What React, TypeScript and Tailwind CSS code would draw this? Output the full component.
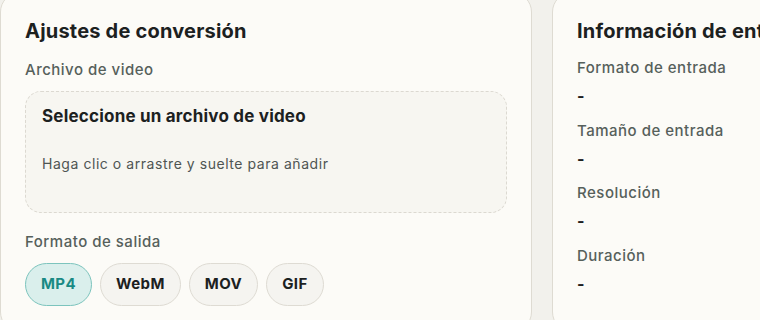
import React from 'react'

const formats = ['MP4', 'WebM', 'MOV', 'GIF']

const info = [
    'Formato de entrada',
    'Tamaño de entrada',
    'Resolución',
    'Duración',
]

const App = () => {
    return (
        <div className='w-[760px] h-[320px] overflow-hidden bg-[#f2f1ec] font-["Inter",sans-serif] text-[#1c211f]'>
            <div className='flex gap-5 -mt-2'>
                <div className='w-[532px] shrink-0 h-[340px] bg-[#fcfbf7] border border-[#dedbd2] rounded-[20px] px-6 pt-6'>
                    <h2 className='text-[20px] font-bold leading-7 tracking-[0.2px]'>Ajustes de conversión</h2>
                    <div className='mt-[15px] text-[15px] font-medium text-[#56605b] leading-5 tracking-[0.5px]'>Archivo de video</div>
                    <div className='mt-[11px] h-[122px] rounded-[16px] border border-dashed border-[#dcd9d1] bg-[#f7f6f1] px-4 pt-[12px]'>
                        <div className='text-[17px] font-bold leading-6 tracking-[0.2px]'>Seleccione un archivo de video</div>
                        <div className='mt-[26px] text-[14px] text-[#4f5553] leading-5 tracking-[0.55px]'>Haga clic o arrastre y suelte para añadir</div>
                    </div>
                    <div className='mt-[19px] text-[15px] font-medium text-[#56605b] leading-5 tracking-[0.5px]'>Formato de salida</div>
                    <div className='mt-[11px] flex gap-2'>
                        {formats.map((f, i) => (
                            <button
                                key={f}
                                className={i === 0
                                    ? 'h-[43px] px-[15px] rounded-full border border-[#7cc4bd] bg-[#daefec] text-[#1a8a84] text-[15px] font-bold tracking-[0.4px]'
                                    : 'h-[43px] px-[15px] rounded-full border border-[#dedbd3] bg-[#f5f4f0] text-[#1c211f] text-[15px] font-bold tracking-[0.4px]'}
                            >
                                {f}
                            </button>
                        ))}
                    </div>
                </div>
                <div className='w-[532px] shrink-0 h-[340px] bg-[#fcfbf7] border border-[#dedbd2] rounded-[20px] px-6 pt-6'>
                    <h2 className='text-[20px] font-bold leading-7 tracking-[0.2px] whitespace-nowrap'>Información de entrada</h2>
                    <div className='mt-[13px] flex flex-col'>
                        {info.map((label) => (
                            <div key={label} className='h-[62.5px]'>
                                <div className='text-[15px] font-medium text-[#56605b] leading-5 tracking-[0.5px]'>{label}</div>
                                <div className='mt-[8px] text-[16px] font-bold leading-5'>-</div>
                            </div>
                        ))}
                    </div>
                </div>
            </div>
        </div>
    )
}

export default App
